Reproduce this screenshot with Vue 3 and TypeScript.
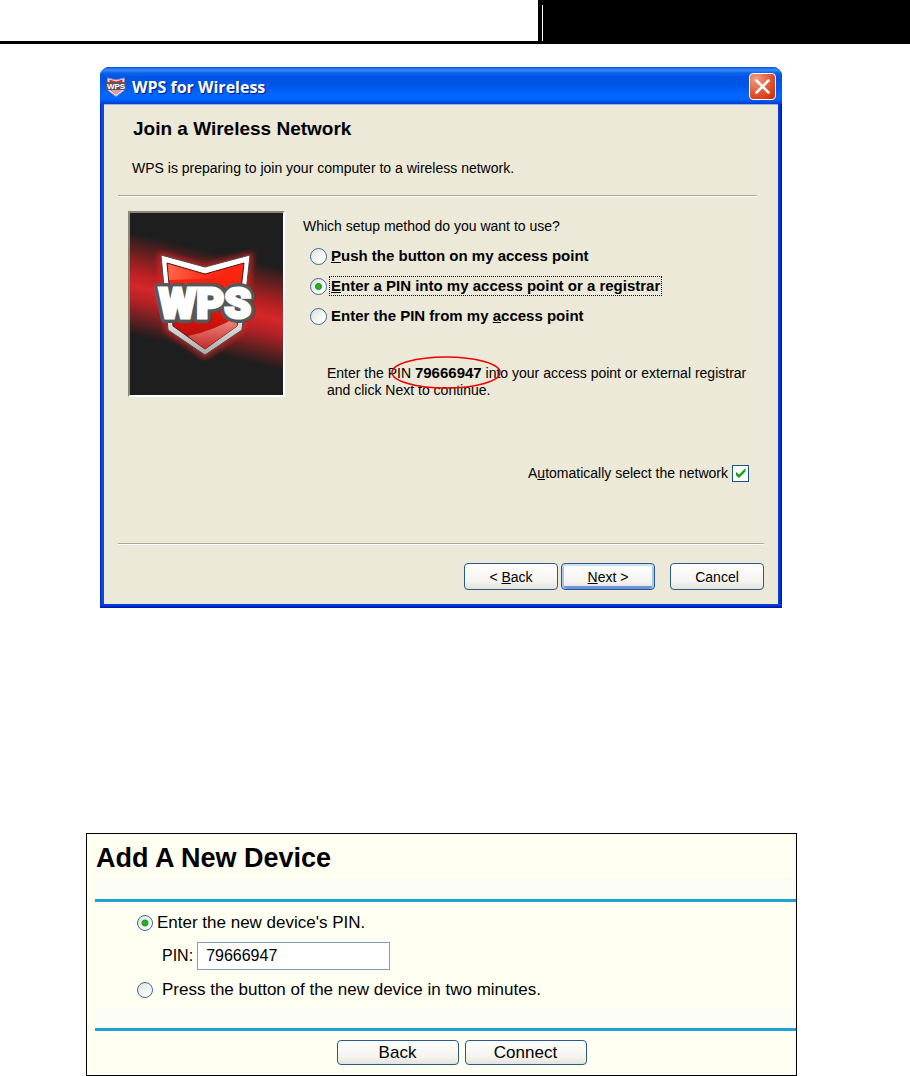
<script setup lang="ts">
import { ref } from 'vue'

const method = ref('pin-out')
const autoSelect = ref(true)
const pin = ref('79666947')
const addMode = ref('pin')
</script>

<template>
  <div class="page">
    <header class="masthead">
      <div class="masthead-left"></div>
      <div class="masthead-right"><span class="masthead-bar"></span></div>
    </header>

    <section class="dialog" aria-labelledby="dlg-title">
      <div class="titlebar">
        <svg class="app-icon" viewBox="0 0 20 20" aria-hidden="true">
          <path d="M1.500 1 L10 3 L18.500 1 L18 13.500 L10 19.500 L2 13.500 Z" fill="#f0eef0" stroke="#8d93b5" stroke-width="1" />
          <path d="M3.500 2.500 L10 4.500 L16.500 2.500 L16 13 L10 17.500 L4 13 Z" fill="#e0281c" />
          <path d="M5 13 L16 13 L10 18 Z" fill="#d9a3a3" />
          <rect x="0" y="5" width="20" height="8" rx="1" fill="#5d5560" />
          <text x="10" y="12" text-anchor="middle" class="icon-text">WPS</text>
        </svg>
        <h1 id="dlg-title" class="title">WPS for Wireless</h1>
        <button class="close" type="button" aria-label="Close">
          <svg viewBox="0 0 25 25" aria-hidden="true">
            <path d="M6.500 6.500 L18.500 18.500 M18.500 6.500 L6.500 18.500" stroke="#fff" stroke-width="2.500" stroke-linecap="round" />
          </svg>
        </button>
      </div>

      <div class="body">
        <h2 class="heading">Join a Wireless Network</h2>
        <p class="intro">WPS is preparing to join your computer to a wireless network.</p>
        <hr class="rule" />

        <div class="main">
          <div class="picture">
            <svg viewBox="0 0 153 182" preserveAspectRatio="none" aria-hidden="true">
              <defs>
                <linearGradient id="beam" gradientUnits="userSpaceOnUse" x1="92" y1="24" x2="61" y2="155">
                  <stop offset="0" stop-color="#1e1e1e" />
                  <stop offset="0.120" stop-color="#1e1e1e" />
                  <stop offset="0.400" stop-color="#b82023" />
                  <stop offset="0.500" stop-color="#d42729" />
                  <stop offset="0.600" stop-color="#b82225" />
                  <stop offset="0.860" stop-color="#1e1e1e" />
                  <stop offset="1" stop-color="#1e1e1e" />
                </linearGradient>
                <linearGradient id="rim" x1="0" y1="0" x2="0" y2="1">
                  <stop offset="0.500" stop-color="#fff" />
                  <stop offset="1" stop-color="#aaa" />
                </linearGradient>
                <linearGradient id="field" x1="0" y1="0" x2="0" y2="1">
                  <stop offset="0" stop-color="#ff2a14" />
                  <stop offset="0.400" stop-color="#ef1c0b" />
                  <stop offset="1" stop-color="#a80c0c" />
                </linearGradient>
                <linearGradient id="gloss" x1="0" y1="0" x2="0" y2="1">
                  <stop offset="0" stop-color="#f09088" />
                  <stop offset="1" stop-color="#c52b2b" />
                </linearGradient>
                <linearGradient id="sheen" x1="0" y1="0" x2="1" y2="0">
                  <stop offset="0" stop-color="#ff8668" stop-opacity="0.700" />
                  <stop offset="1" stop-color="#ff4a2c" stop-opacity="0" />
                </linearGradient>
                <filter id="glow" x="-20%" y="-20%" width="140%" height="140%">
                  <feGaussianBlur stdDeviation="3" />
                </filter>
              </defs>
              <rect width="153" height="182" fill="url(#beam)" />
              <path d="M31 43 L75 55 L120 43 L112 116 L75 142 L38 116 Z" fill="none" stroke="#e02624" stroke-width="5" filter="url(#glow)" />
              <path d="M31 42 L75 54 L120 42 L112 117 L75 142 L38 117 Z" fill="url(#rim)" stroke="#4a4a4a" stroke-width="1" />
              <path d="M37 50 L75 61 L114 50 L107 113 L75 136 L43 113 Z" fill="url(#field)" stroke="#5a1414" stroke-width="1" />
              <path d="M38 51 L75 62 L94 56 L90 65 L39 67 Z" fill="url(#sheen)" />
              <path d="M58 123 Q86 117 106 104 L107 113 L75 136 Z" fill="url(#gloss)" />
              <text x="75" y="105" text-anchor="middle" class="logo-outline">WPS</text>
              <text x="75" y="105" text-anchor="middle" class="logo-text">WPS</text>
            </svg>
          </div>

          <div class="choices">
            <p id="method-q" class="question">Which setup method do you want to use?</p>
            <div class="radios" role="radiogroup" aria-labelledby="method-q">
              <label class="choice">
                <input v-model="method" type="radio" name="method" value="push" class="radio" />
                <span class="choice-text"><u>P</u>ush the button on my access point</span>
              </label>
              <label class="choice">
                <input v-model="method" type="radio" name="method" value="pin-out" class="radio" />
                <span class="choice-text focused"><u>E</u>nter a PIN into my access point or a registrar</span>
              </label>
              <label class="choice">
                <input v-model="method" type="radio" name="method" value="pin-in" class="radio" />
                <span class="choice-text">Enter the PIN from my <u>a</u>ccess point</span>
              </label>
            </div>
            <p class="instruction">
              Enter the PIN <strong class="pin">79666947<svg class="ring" viewBox="0 0 110 33" preserveAspectRatio="none" aria-hidden="true"><ellipse cx="55" cy="16.500" rx="54" ry="15.500" fill="none" stroke="#f00000" stroke-width="1.500" /></svg></strong> into your access point or external registrar<br />and click Next to continue.
            </p>
          </div>
        </div>

        <label class="auto">
          <span>A<u>u</u>tomatically select the network</span>
          <input v-model="autoSelect" type="checkbox" class="check" />
        </label>

        <hr class="rule rule-low" />
        <div class="actions">
          <button type="button" class="btn">&lt; <u>B</u>ack</button>
          <button type="button" class="btn btn-default"><u>N</u>ext &gt;</button>
          <button type="button" class="btn btn-cancel">Cancel</button>
        </div>
      </div>
    </section>

    <form class="panel" @submit.prevent>
      <h2 class="panel-title">Add A New Device</h2>
      <div class="strip"></div>
      <div class="fields">
        <label class="field-row">
          <input v-model="addMode" type="radio" name="mode" value="pin" class="radio radio-sm" />
          <span>Enter the new device's PIN.</span>
        </label>
        <div class="pin-row">
          <label for="pin-input">PIN:</label>
          <input id="pin-input" v-model="pin" type="text" class="pin-input" />
        </div>
        <label class="field-row field-row-wide">
          <input v-model="addMode" type="radio" name="mode" value="button" class="radio radio-sm" />
          <span>Press the button of the new device in two minutes.</span>
        </label>
      </div>
      <div class="strip"></div>
      <div class="panel-actions">
        <button type="button" class="btn panel-btn">Back</button>
        <button type="submit" class="btn panel-btn">Connect</button>
      </div>
    </form>
  </div>
</template>

<style>
body {
  background: #fff;
}
</style>

<style scoped>
.page {
  font-family: "Liberation Sans", Arial, sans-serif;
  font-size: 14px;
  color: #000;
}
.page *,
.page {
  box-sizing: border-box;
}
h1,
h2,
p,
hr {
  margin: 0;
}
.masthead {
  display: grid;
  grid-template-columns: 538fr 372fr;
  height: 44px;
}
.masthead-left {
  border-bottom: 3px solid #000;
}
.masthead-right {
  display: flex;
  padding: 5px 0 3px 4px;
  background: #000;
}
.masthead-bar {
  width: 1px;
  background: #fff;
}

.dialog {
  margin: 23px 128px 0 100px;
  padding-bottom: 4px;
  background:
    linear-gradient(#0044e8, #0030d0 2px, #00109a) bottom / 100% 4px no-repeat,
    linear-gradient(to right, #0019cf, #0855dd 2px, #0044e8 4px, #0044e8 calc(100% - 4px), #0030d0 calc(100% - 2px), #00109a);
  border-radius: 9px 9px 0 0;
  overflow: hidden;
}
.titlebar {
  display: flex;
  align-items: center;
  height: 37px;
  padding: 2px 6px 0;
  background: linear-gradient(#0950d8, #3c8cf8 3px, #0a62ee 6px, #0054e4 10px, #0056e8 18px, #0066ff 27px, #0066ff 32px, #0048d8 36px, #003cc4);
}
.app-icon {
  width: 20px;
  height: 20px;
}
.icon-text {
  font: bold 8px "Liberation Sans", sans-serif;
  fill: #fff;
}
.title {
  flex: 1;
  padding-left: 6px;
  color: #fff;
  font: bold 16px/22px "Open Sans", "Noto Sans", sans-serif;
  text-shadow: 1px 1px 1px #0a1883;
}
.close {
  width: 27px;
  height: 27px;
  padding: 0;
  border: 1px solid #fff;
  border-radius: 4px;
  background: radial-gradient(circle at 25% 20%, #f0a088, #e2603f 45%, #d83a10 80%, #b83010);
}
.close svg {
  display: block;
  width: 25px;
  height: 25px;
}

.body {
  margin: 0 4px;
  padding: 14px;
  background: #ece9d8;
  border-top: 1px solid #9fb4e4;
}
.heading {
  padding-left: 15px;
  font-size: 19px;
  line-height: 20px;
}
.intro {
  margin-top: 20px;
  padding-left: 14px;
  line-height: 18px;
}
.rule {
  height: 2px;
  margin: 18px 7px 0 0;
  border: 0;
  border-top: 1px solid #aca899;
  border-bottom: 1px solid #fff;
}
.main {
  display: flex;
  gap: 18px;
  margin-top: 14px;
  padding-left: 10px;
}
.picture {
  flex: none;
  width: 157px;
  height: 186px;
  border: 2px solid;
  border-color: #8a8779 #fff #fff #8a8779;
}
.picture svg {
  display: block;
  width: 100%;
  height: 100%;
}
.logo-outline,
.logo-text {
  font: 900 43px Roboto, "Liberation Sans", sans-serif;
  fill: #fff;
}
.logo-outline {
  stroke: #55575a;
  stroke-width: 10px;
  stroke-linejoin: round;
}
.logo-text {
  stroke: #fff;
  stroke-width: 3px;
}
.choices {
  padding-top: 6px;
}
.question {
  line-height: 18px;
}
.radios {
  margin-top: 6px;
  padding-left: 7px;
}
.choice {
  display: flex;
  align-items: center;
  gap: 3px;
  height: 30px;
  font-size: 15px;
  font-weight: bold;
}
.choice-text {
  padding: 0 1px;
  line-height: 18px;
  white-space: nowrap;
}
.focused {
  outline: 1px dotted #000;
}
.radio {
  appearance: none;
  flex: none;
  width: 17px;
  height: 17px;
  margin: 0;
  border: 1px solid #3b6a98;
  border-radius: 50%;
  background: linear-gradient(135deg, #dcdcd6, #fff 75%);
}
.radio:checked {
  background: radial-gradient(circle, #2fb52b 0, #21a121 3px, transparent 4px), linear-gradient(135deg, #dcdcd6, #fff 75%);
}
.instruction {
  margin-top: 34px;
  padding-left: 24px;
  line-height: 17px;
  white-space: nowrap;
}
.pin {
  position: relative;
  font-size: 15px;
  line-height: 15px;
}
.ring {
  position: absolute;
  top: -8px;
  left: -24px;
  width: 110px;
  height: 33px;
}
.auto {
  display: flex;
  align-items: center;
  justify-content: flex-end;
  gap: 4px;
  height: 18px;
  margin-top: 65px;
  padding-right: 15px;
}
.check {
  appearance: none;
  width: 17px;
  height: 17px;
  margin: 0;
  border: 1px solid #1c5180;
  background: #fcfcfa;
  display: grid;
  place-items: center;
}
.check:checked::before {
  content: "";
  width: 10px;
  height: 10px;
  background: #21a121;
  clip-path: polygon(0 35%, 35% 65%, 100% 0, 100% 35%, 35% 100%, 0 70%);
}
.rule-low {
  margin: 61px 0 0;
}
.actions {
  display: flex;
  justify-content: flex-end;
  gap: 3px;
  margin-top: 18px;
}
.btn {
  width: 94px;
  height: 27px;
  padding: 0;
  border: 1px solid #2a5a8c;
  border-radius: 4px;
  background: linear-gradient(#fff, #f4f3ef 70%, #e4e2da);
  color: #000;
  font: 14px "Liberation Sans", Arial, sans-serif;
}
.btn-default {
  box-shadow: inset 0 2px 0 #cee0fc, inset 2px 0 0 #a9c5f2, inset -2px 0 0 #a9c5f2, inset 0 -3px 0 #6c94de;
}
.btn-cancel {
  margin-left: 12px;
}

.panel {
  margin: 225px 113px 0 86px;
  border: 1px solid #000;
  background: #fffff2;
  font-size: 17px;
}
.panel-title {
  padding: 8px 9px 4px;
  font-size: 27px;
  line-height: 32px;
}
.strip {
  height: 24px;
  margin-left: 8px;
  background: #fcfdf6;
  border-bottom: 3px solid #1ea2d2;
}
.fields {
  padding: 8px 0 4px 50px;
}
.field-row {
  display: flex;
  align-items: center;
  gap: 4px;
  height: 26px;
}
.radio-sm {
  width: 16px;
  height: 16px;
}
.field-row-wide {
  gap: 9px;
}
.pin-row {
  display: flex;
  align-items: center;
  gap: 4px;
  margin: 6px 0 7px;
  padding-left: 25px;
  font-size: 16px;
}
.pin-input {
  width: 193px;
  height: 28px;
  padding: 0 8px;
  border: 1px solid #7f9db9;
  background: #fff;
  font: 16px "Liberation Sans", Arial, sans-serif;
}
.panel-actions {
  display: flex;
  justify-content: center;
  gap: 6px;
  padding: 9px 0 10px 40px;
}
.panel-btn {
  width: 122px;
  height: 25px;
  font-size: 17px;
}
</style>
